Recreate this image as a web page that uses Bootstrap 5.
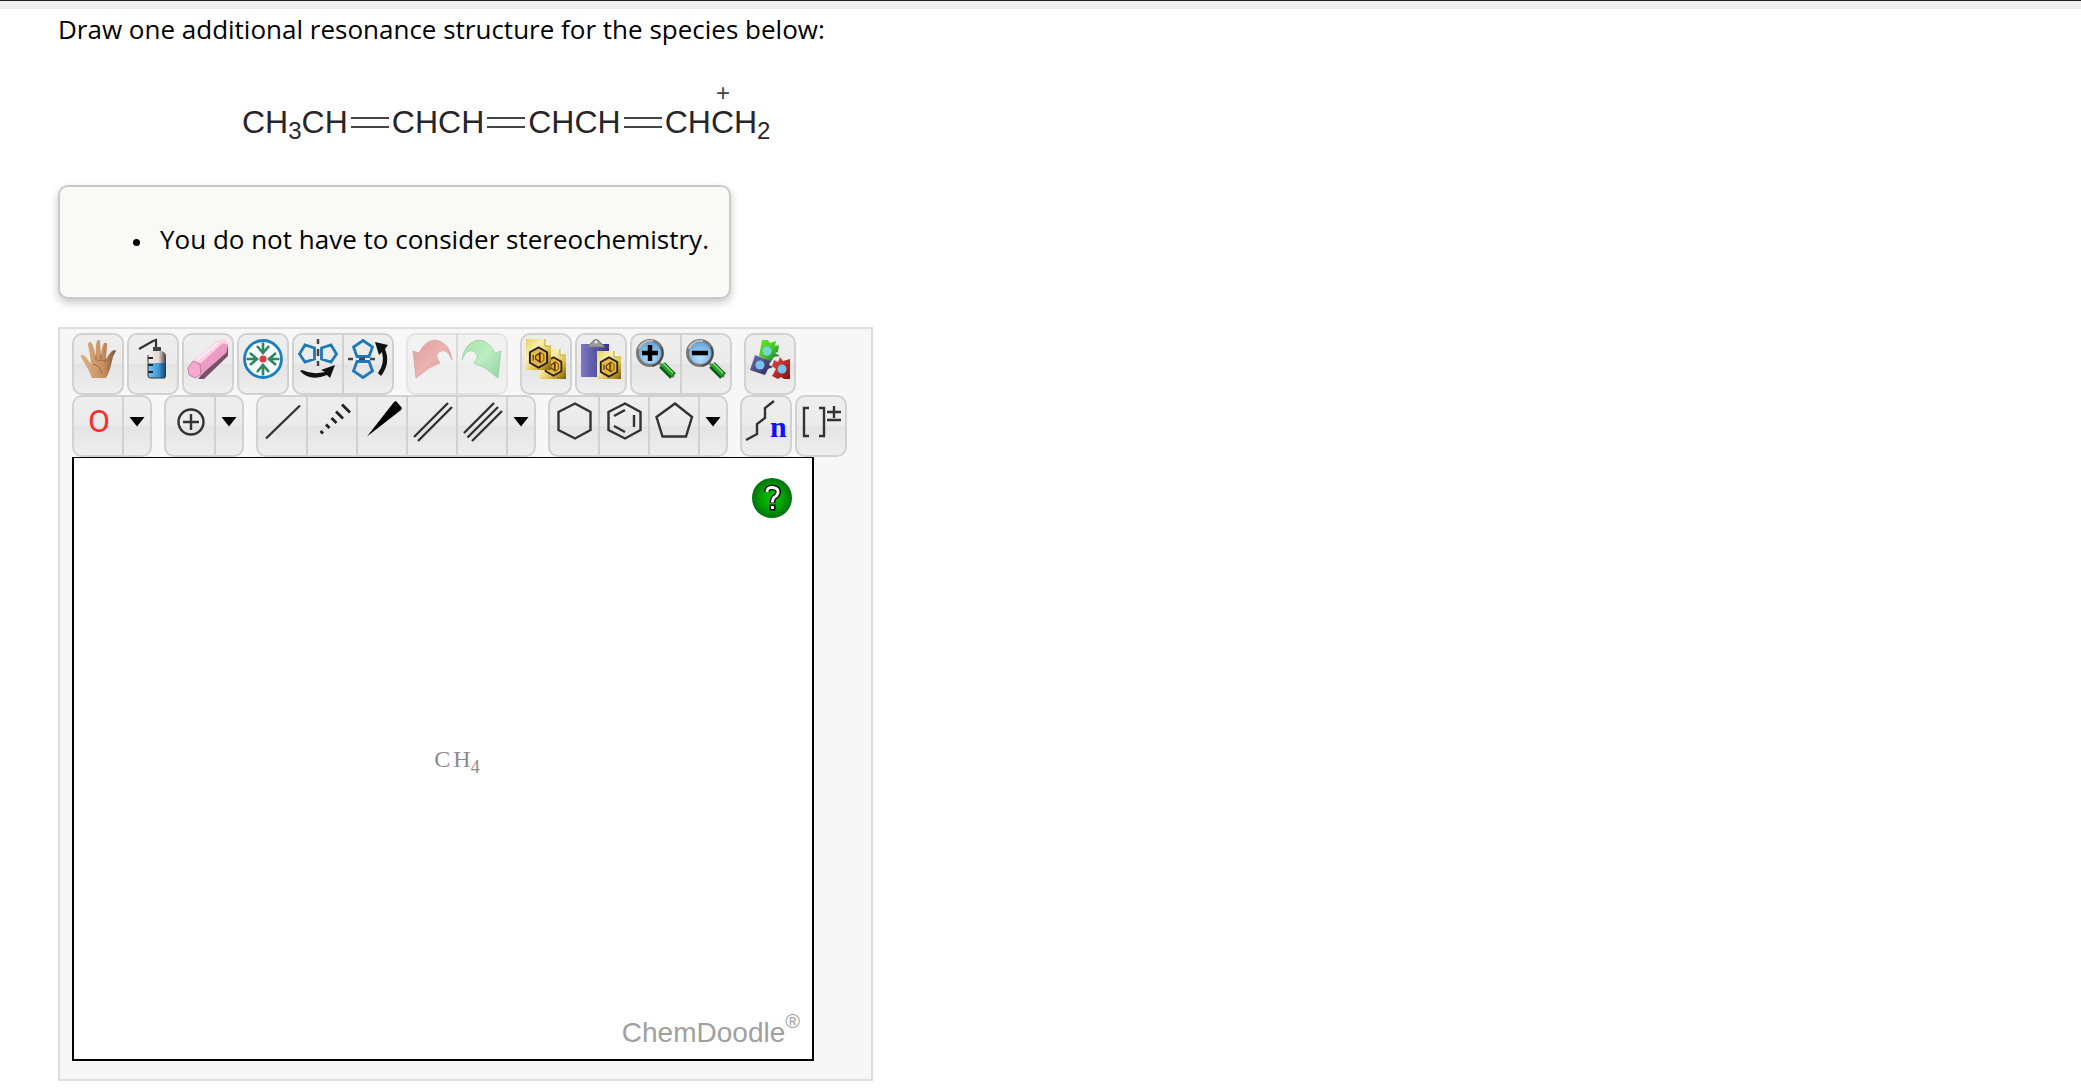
<!DOCTYPE html>
<html lang="en">
<head>
<meta charset="utf-8">
<meta name="viewport" content="width=device-width, initial-scale=1">
<title>Resonance structures</title>
<link href="https://cdn.jsdelivr.net/npm/bootstrap@5.3.0/dist/css/bootstrap.min.css" rel="stylesheet">
<style>
body{font-family:"Open Sans","Noto Sans",sans-serif;font-size:26px;line-height:36px;color:#000;background:#fff}
.topbar{height:9px;background:#f0eff0;border-top:1px solid #231f20}
.question{padding:2px 58px 8px}
.formula{font:32px/36px "Liberation Sans",Arial,sans-serif;color:#26262a;margin:57px 0 45px 184px}
.formula sub{font-size:24px;line-height:0;bottom:0;position:static;vertical-align:-6px}
.bond{width:38px;height:11px;margin:0 3px;border:solid #444;border-width:2px 0}
.charge{top:-29px;left:5px;font-size:24px;color:#444}
.hint{background:#f9faf5;border:2px solid #c9c9c9;border-radius:10px;box-shadow:0 4px 8px rgba(0,0,0,.22);padding:34px 20px 40px 100px;width:fit-content;margin-bottom:28px}
.hint ul{padding:0;list-style:none}
.hint li{position:relative}
.hint li::before{content:"";position:absolute;left:-27px;top:18px;width:7px;height:7px;border-radius:50%;background:#000}
.sketcher{background:#f7f7f7;border:2px solid #ddd;padding:4px 24px 18px 12px;width:fit-content}
.tools{gap:3px}
.tools .sep{margin-left:9px}
.tools .btn{--bs-btn-padding-x:4px;--bs-btn-padding-y:4px;height:62px;border:2px solid #d1d1d1;border-radius:10px;background:linear-gradient(#eee,#ebebeb 49%,#e4e4e4 51%,#eee);display:flex;align-items:flex-start;line-height:1}
.tools .btn-group>.btn:not(:first-child){margin-left:-2px}
.tools .btn:disabled{opacity:.5;border-color:#d1d1d1}
.tools .btn svg{width:40px;height:40px;display:block;overflow:visible}
.tools .btn .caret{width:18px}
.canvas-area{width:742px;height:604px;border:2px solid #000;border-top-width:1px;background:#fff}
.help-btn{width:40px;height:40px;top:20px;right:20px;border:0;padding:0;background:none}
.help-btn svg{display:block}
.methane{font:24px/28px "Liberation Serif","Times New Roman",serif;color:#918a8a;gap:3px;margin-left:28px}
.methane sub{font-size:18px;line-height:0;bottom:0;position:static;vertical-align:-6px}
.brand{font:28px/32px "Liberation Sans",Arial,sans-serif;color:#a0a0a0;right:12px;bottom:10px}
.brand sup{font-size:20px;line-height:1;position:static;vertical-align:14px}
.ln{fill:none;stroke:#333;stroke-width:2.4}
</style>
<script src="https://cdn.jsdelivr.net/npm/bootstrap@5.3.0/dist/js/bootstrap.bundle.min.js"></script>
</head>
<body>
<svg width="0" height="0" class="position-absolute" aria-hidden="true">
<defs>
<linearGradient id="skin"><stop offset="0" stop-color="#e0b184"/><stop offset=".65" stop-color="#c58e60"/><stop offset="1" stop-color="#7d5636"/></linearGradient>
<linearGradient id="water"><stop offset="0" stop-color="#7cc4ee"/><stop offset=".6" stop-color="#3b97d6"/><stop offset="1" stop-color="#123e60"/></linearGradient>
<linearGradient id="glass"><stop offset="0" stop-color="#f7ece6"/><stop offset=".6" stop-color="#e3d8d2"/><stop offset="1" stop-color="#3b3b3b"/></linearGradient>
<linearGradient id="redarrow" x1="0" y1="0" x2="1" y2="1"><stop offset="0" stop-color="#c94848"/><stop offset=".5" stop-color="#e07070"/><stop offset="1" stop-color="#a33"/></linearGradient>
<linearGradient id="greenarrow" x1="0" y1="0" x2="1" y2="1"><stop offset="0" stop-color="#5fd35f"/><stop offset=".5" stop-color="#7fe58c"/><stop offset="1" stop-color="#2fae50"/></linearGradient>
<linearGradient id="paper" x1="0" y1="0" x2="1" y2="1"><stop offset="0" stop-color="#e4cf62"/><stop offset=".35" stop-color="#fbf2b0"/><stop offset=".65" stop-color="#e2c24c"/><stop offset="1" stop-color="#7a5c00"/></linearGradient>
<linearGradient id="violet"><stop offset="0" stop-color="#7d79c4"/><stop offset="1" stop-color="#37338a"/></linearGradient>
<radialGradient id="lens" cx=".5" cy=".7" r=".7"><stop offset="0" stop-color="#b5e0ff"/><stop offset="1" stop-color="#5e9ed6"/></radialGradient>
<radialGradient id="helpfill"><stop offset="0" stop-color="#00c800"/><stop offset=".5" stop-color="#00a800"/><stop offset="1" stop-color="#007010"/></radialGradient>
<linearGradient id="puzg" x1="0" y1="0" x2="1" y2="1"><stop offset="0" stop-color="#63e52c"/><stop offset=".5" stop-color="#47c82c"/><stop offset="1" stop-color="#0f5f3c"/></linearGradient>
<linearGradient id="puzb" x1="0" y1="0" x2="1" y2="1"><stop offset="0" stop-color="#7470b5"/><stop offset="1" stop-color="#29254f"/></linearGradient>
<linearGradient id="puzr" x1="0" y1="0" x2="1" y2="1"><stop offset="0" stop-color="#ee4545"/><stop offset="1" stop-color="#861010"/></linearGradient>
<symbol id="ring" viewBox="0 0 24 24"><path d="M12 1.500 21 6.500V17.500L12 22.500 3 17.500V6.500Z" fill="#e5b54a" stroke="#222" stroke-width="2"/><path d="M6.500 9.500V15M9 10.500 13 7.500V16.500L9 13.500Z" fill="#f5ad22" stroke="#40310c" stroke-width="1.200"/><path d="M14 6.500 17.500 9V15L14 17.500Z" fill="#ffb020" stroke="#40310c" stroke-width=".8"/></symbol>
<symbol id="glasslens" viewBox="0 0 40 40"><path d="M21 22 38 38" stroke="#888" stroke-width="3"/><path d="m26 26 11 11" stroke="#075d0b" stroke-width="8"/><path d="m26 25 11 11" stroke="#22a52a" stroke-width="4"/><path d="m27 24 10 10" stroke="#80dc80" stroke-width="1.500"/><circle cx="14" cy="14" r="12.500" fill="url(#lens)" stroke="#777" stroke-width="3"/><path d="M3 10A12 12 0 0 1 17 2" fill="none" stroke="#bbb" stroke-width="2"/><path d="M25 8A13 13 0 0 1 16 27" fill="none" stroke="#444" stroke-width="1.500"/></symbol>
<symbol id="down" viewBox="0 0 18 40"><path d="M1.500 16h15L9 25.500Z" fill="#000"/></symbol>
</defs>
</svg>

<div class="topbar"></div>
<main class="question">
  <p class="mb-0">Draw one additional resonance structure for the species below:</p>

  <div class="formula d-flex align-items-center">
    <span>CH<sub>3</sub>CH</span><span class="bond"></span><span>CHCH</span><span class="bond"></span><span>CHCH</span><span class="bond"></span><span>CH<span class="position-relative">C<span class="charge position-absolute">+</span></span>H<sub>2</sub></span>
  </div>

  <div class="hint"><ul class="mb-0"><li>You do not have to consider stereochemistry.</li></ul></div>

  <section class="sketcher" aria-label="Structure sketcher">
    <div class="tools d-flex" role="toolbar" aria-label="Editing">
      <button type="button" class="btn" aria-label="Move"><svg viewBox="0 0 40 40"><path d="M14 39Q11 31 7 25L3 18q-1-3 2-2 3 1 5 5l3 4Q12 14 10 6q0-3 2-3 2 0 3 4l3 10Q17 7 19 2q2-2 3 0l1 14Q24 7 26 4q3-1 3 1l-1 15q3-5 6-8 4-2 4 0-3 4-4 10-2 10-6 17Z" fill="url(#skin)"/><path d="M15 25q7 1 9 10M19 22q5-2 8 0M18 17v4M23 16v4M28 20l-1 3" fill="none" stroke="#9a6a42"/></svg></button>
      <button type="button" class="btn" aria-label="Clear"><svg viewBox="0 0 40 40"><path d="M6 10 20 2 23 1V9" fill="none" stroke="#333" stroke-width="2.200"/><path d="M20 8h8v5h-8Z" fill="#444"/><path d="M15 17q1-4 5-5h8q5 1 5 5v7H15Z" fill="url(#glass)"/><path d="M15 24H33V37q0 2-2 2H17q-2 0-2-2Z" fill="url(#water)"/><path d="M15 19h5M15 26h5M15 33h5" stroke="#222" stroke-width="1.800"/><path d="M15 16V37q0 2 3 2H32" fill="none" stroke="#333"/></svg></button>
      <button type="button" class="btn" aria-label="Erase"><svg viewBox="0 0 40 40"><path d="M40 5V17L16 40H10Z" fill="#5a2a46" opacity=".8"/><path d="M5 22 29 2 36 0 40 4 38 14 12 26Z" fill="#fcd0e5"/><path d="M12 25 35 4 40 6 38 14 13 36Z" fill="#eb9bc5"/><path d="M0 29 5 22 12 25 13 36 7 39 1 36Z" fill="#f3a9d0" stroke="#a2557d" stroke-width=".6"/><path d="M9 21 30 4" stroke="#fff" stroke-width="2" opacity=".6"/></svg></button>
      <button type="button" class="btn" aria-label="Center"><svg viewBox="0 0 40 40"><circle cx="20" cy="20" r="18.500" fill="#f7fcff" stroke="#1c7fbe" stroke-width="2.800"/><path d="M20 3.500V14M14 7l6 7 6-7M20 36.500V26M14 33l6-7 6 7M3.500 20H14M7 14l7 6-7 6M36.500 20H26M33 14l-7 6 7 6" fill="none" stroke="#2f8560" stroke-width="2.600"/><circle cx="20" cy="20" r="3.500" fill="#e53838"/></svg></button>
      <div class="btn-group">
        <button type="button" class="btn" aria-label="Flip horizontally"><svg viewBox="0 0 40 40"><path d="M1.500 15 7 6 16.500 9V20L7 23Z M38.500 15 33 6 23.500 9V20L33 23Z" fill="none" stroke="#1f78b8" stroke-width="2.800"/><path d="M20 0V5M20 10V17M20 22V27" stroke="#444" stroke-width="2.500"/><path d="M2 32Q12 43 29 36L32 39 37 26 23 31 27 33Q14 36 4 31Z" fill="#111"/></svg></button>
        <button type="button" class="btn" aria-label="Flip vertically"><svg viewBox="0 0 40 40"><path d="M15 1.500 24.500 8 21 17.500H9L5.500 8Z M15 38.500 24.500 32 21 22.500H9L5.500 32Z" fill="none" stroke="#1f78b8" stroke-width="2.800"/><path d="M0 20H5M11 20H17M22 20H27" stroke="#444" stroke-width="2.500"/><path d="M33 37Q43 24 37 10L40 6 27 3 31 16 34 13Q37 25 30 34Z" fill="#111"/></svg></button>
      </div>
      <div class="btn-group sep">
        <button type="button" class="btn" aria-label="Undo" disabled><svg viewBox="0 0 40 40"><path d="M4 39 1 12 7 14Q13 1 24 1 38 4 40 21 35 8 27 13 22 17 28 24L17 29Z" fill="url(#redarrow)" stroke="#b55" stroke-width=".8"/></svg></button>
        <button type="button" class="btn" aria-label="Redo" disabled><svg viewBox="0 0 40 40"><path d="M36 39 39 12 33 14Q27 1 16 1 2 4 0 21 5 8 13 13 18 17 12 24L23 29Z" fill="url(#greenarrow)" stroke="#4a5" stroke-width=".8"/></svg></button>
      </div>
      <button type="button" class="btn sep" aria-label="Copy"><svg viewBox="0 0 40 40"><path d="M14 10H34L40 16V40H14Z" fill="url(#paper)"/><path d="M34 10V16H40" fill="#fff9cf" stroke="#b7a14b"/><use href="#ring" x="17" y="17" width="21" height="21"/><path d="M0 0H19L25 7V31H0Z" fill="url(#paper)"/><path d="M19 0V7H25" fill="#fff9cf" stroke="#b7a14b"/><use href="#ring" x="1" y="7" width="23" height="23"/></svg></button>
      <button type="button" class="btn" aria-label="Paste"><svg viewBox="0 0 40 40"><path d="M0 5H28V38H0Z" fill="url(#violet)"/><path d="M6 8 11 3Q15-2 19 3L24 8Z" fill="#999" stroke="#777"/><circle cx="15" cy="3" r="1.500" fill="#eee"/><path d="M16 12H33L40 18V40H16Z" fill="url(#paper)"/><path d="M33 12V18H40" fill="#fff9cf" stroke="#b7a14b"/><use href="#ring" x="17" y="17" width="22" height="22"/></svg></button>
      <div class="btn-group">
        <button type="button" class="btn" aria-label="Zoom in"><svg viewBox="0 0 40 40"><use href="#glasslens"/><path d="M14 6V22M6 14H22" stroke="#000" stroke-width="4.500"/></svg></button>
        <button type="button" class="btn" aria-label="Zoom out"><svg viewBox="0 0 40 40"><use href="#glasslens"/><path d="M6 14H22" stroke="#000" stroke-width="4.500"/></svg></button>
      </div>
      <button type="button" class="btn sep" aria-label="Templates"><svg viewBox="0 0 40 40"><path d="M12 1 18 1 20 4 26 2 25 7 29 6 28 13 25 14 30 17 24 18 21 23 9 17Z" fill="url(#puzg)"/><path d="M5 16 21 22 19 26 23 28 18 30 15 36 0 31Z" fill="url(#puzb)"/><path d="M24 21 28 23 30 18 33 22 40 20V40H34L31 38 28 40 22 37 26 30 22 27Z" fill="url(#puzr)"/><circle cx="17" cy="12" r="4.500" fill="#6fd8d0"/><circle cx="10" cy="26" r="4.500" fill="#74c4ee"/><circle cx="32" cy="30" r="4.500" fill="#74c4ee"/></svg></button>
    </div>

    <div class="tools d-flex" role="toolbar" aria-label="Drawing">
      <div class="btn-group">
        <button type="button" class="btn" aria-label="Oxygen"><svg viewBox="0 0 40 40"><text x="21" y="31" text-anchor="middle" font-family="Roboto, sans-serif" font-size="32" fill="#ff2a2a">O</text></svg></button>
        <button type="button" class="btn" aria-label="More elements"><svg class="caret"><use href="#down"/></svg></button>
      </div>
      <div class="btn-group sep">
        <button type="button" class="btn" aria-label="Increase charge"><svg viewBox="0 0 40 40"><path class="ln" d="M21 13V29M13 21H29"/><circle class="ln" cx="21" cy="21" r="12.500"/></svg></button>
        <button type="button" class="btn" aria-label="More attributes"><svg class="caret"><use href="#down"/></svg></button>
      </div>
      <div class="btn-group sep">
        <button type="button" class="btn" aria-label="Single bond"><svg viewBox="0 0 40 40"><path class="ln" d="M4 37.500 38 4.500"/></svg></button>
        <button type="button" class="btn" aria-label="Recessed bond"><svg viewBox="0 0 40 40"><path d="m8.500 30 2.500 2.500M14 23.500l3.500 3.500M19.500 17l5 5M24 10.500l7 7M30 3.500l8 8" stroke="#222" stroke-width="2.800"/></svg></button>
        <button type="button" class="btn" aria-label="Protruding bond"><svg viewBox="0 0 40 40"><path d="M5 35.500 32 1 34 0 40 7 39 9Z" fill="#000"/></svg></button>
        <button type="button" class="btn" aria-label="Double bond"><svg viewBox="0 0 40 40"><path class="ln" d="M2 36 36 2M6 40 40 6"/></svg></button>
        <button type="button" class="btn" aria-label="Triple bond"><svg viewBox="0 0 40 40"><path class="ln" d="M2 32 32 2M5.500 36.500 36 6M10 40 40 10"/></svg></button>
        <button type="button" class="btn" aria-label="More bonds"><svg class="caret"><use href="#down"/></svg></button>
      </div>
      <div class="btn-group sep">
        <button type="button" class="btn" aria-label="Cyclohexane ring"><svg viewBox="0 0 40 40"><path class="ln" d="M21 2.500 36.500 11V29L21 37.500 4.500 29V11Z"/></svg></button>
        <button type="button" class="btn" aria-label="Benzene ring"><svg viewBox="0 0 40 40"><path class="ln" d="M21 2.500 36.500 11V29L21 37.500 4.500 29V11ZM10 15 21 9M10 25 21 31M30 14V26"/></svg></button>
        <button type="button" class="btn" aria-label="Cyclopentane ring"><svg viewBox="0 0 40 40"><path class="ln" d="M21 2.500 38 16 32 35.500H8.500L2.500 16Z"/></svg></button>
        <button type="button" class="btn" aria-label="More rings"><svg class="caret"><use href="#down"/></svg></button>
      </div>
      <button type="button" class="btn sep" aria-label="Chain"><svg viewBox="0 0 40 40"><path class="ln" d="M0 39 11 33V23L19 17V7L28 0"/><text x="24" y="36" font-family="Liberation Serif, serif" font-weight="bold" font-size="30" fill="#1010ff">n</text></svg></button>
      <button type="button" class="btn" aria-label="Repeat unit"><svg viewBox="0 0 40 40"><path class="ln" d="M8 7H3V35H8M18 7H23V35H18M33 5V17M26 11H40M26 19H40"/></svg></button>
    </div>

    <div class="canvas-area position-relative d-flex align-items-center justify-content-center">
      <button type="button" class="help-btn position-absolute" aria-label="Help"><svg viewBox="0 0 40 40" width="40" height="40"><circle cx="20" cy="20" r="20" fill="url(#helpfill)"/><g fill="none"><path d="M15 14Q15 9 20.500 9.500 27 10 26 15 25 18 22 19.500 20.500 21 20.500 25" stroke="#000" stroke-width="5.600"/><path d="M17.500 26.500h6v6h-6Z" fill="#000"/><path d="M15 14Q15 9 20.500 9.500 27 10 26 15 25 18 22 19.500 20.500 21 20.500 24.500" stroke="#fff" stroke-width="3"/><path d="M19 28h3v3h-3Z" fill="#fff"/></g></svg></button>
      <div class="methane d-flex"><span>C</span><span>H<sub>4</sub></span></div>
      <div class="brand position-absolute">ChemDoodle<sup>®</sup></div>
    </div>
  </section>
</main>
</body>
</html>
